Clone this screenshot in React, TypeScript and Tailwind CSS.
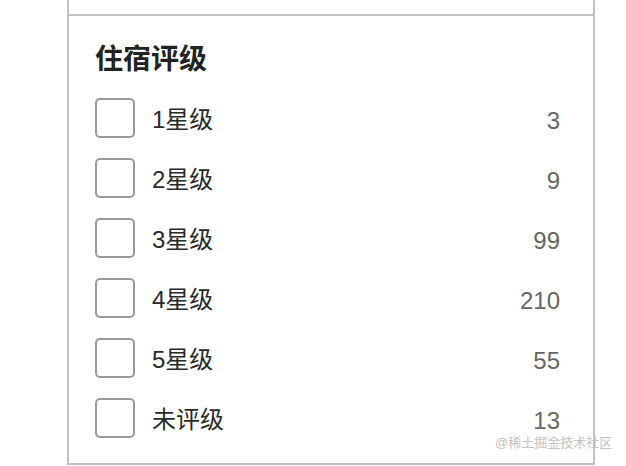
const ratings = [
  { label: "1星级", count: 3 },
  { label: "2星级", count: 9 },
  { label: "3星级", count: 99 },
  { label: "4星级", count: 210 },
  { label: "5星级", count: 55 },
  { label: "未评级", count: 13 },
];

function RatingRow({ label, count }: { label: string; count: number }) {
  return (
    <label className="flex h-[40px] items-center">
      <span className="h-[40px] w-[40px] shrink-0 rounded-[5px] border-2 border-[#9a9a9a] bg-white" />
      <span className="ml-[17px] mt-[4px] text-[24px] leading-none text-[#2a2a2a]">{label}</span>
      <span className="ml-auto mt-[5px] text-[24px] leading-none text-[#666]">{count}</span>
    </label>
  );
}

export default function App() {
  return (
    <div
      className="relative h-[466px] w-[626px] overflow-hidden bg-white"
      style={{ fontFamily: '"Liberation Sans", "Noto Sans CJK SC", sans-serif' }}
    >
      <div className="ml-[67px] w-[528px] border-x-2 border-b-2 border-[#c1c1c1]">
        <div className="h-[14px]" />
        <section className="border-t-2 border-[#c1c1c1] pb-[25px] pl-[26px] pr-[33px] pt-[30px]">
          <h3 className="text-[28px] font-bold leading-[28px] text-[#222]">住宿评级</h3>
          <div className="mt-[24px] flex flex-col gap-[20px]">
            {ratings.map((r) => (
              <RatingRow key={r.label} label={r.label} count={r.count} />
            ))}
          </div>
        </section>
      </div>
      <span className="absolute left-[495px] top-[436px] text-[13px] leading-none text-[#c3c3c3]">
        @稀土掘金技术社区
      </span>
    </div>
  );
}
